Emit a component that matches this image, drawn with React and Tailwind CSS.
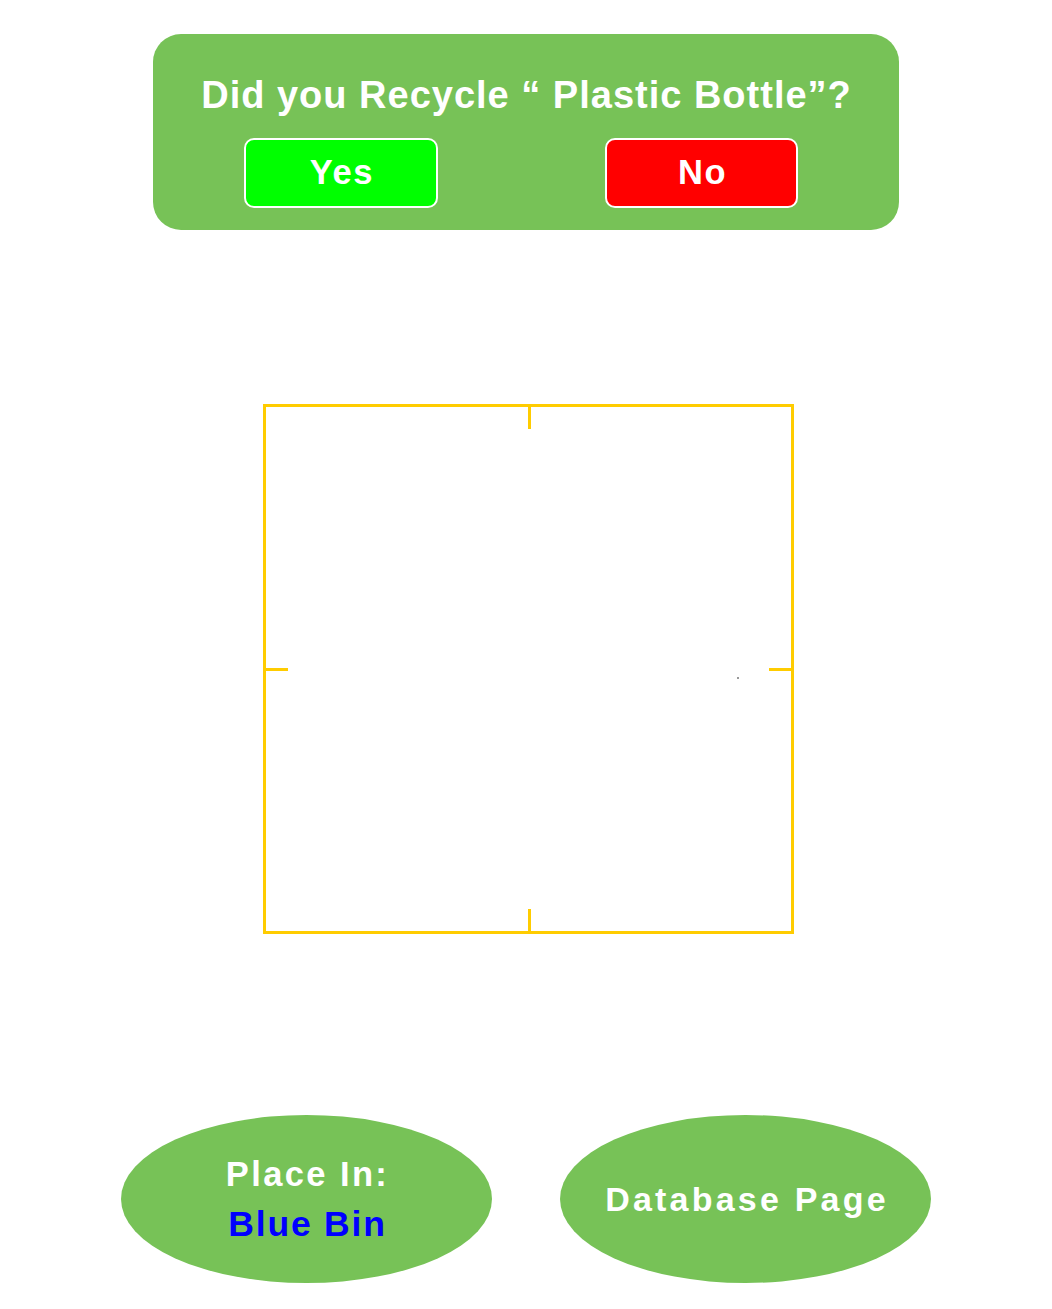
export default function App() {
  return (
    <div className="w-[1052px] h-[1309px] bg-white relative" style={{ fontFamily: '"Liberation Sans", Arial, sans-serif' }}>
      <div className="pt-[34px] pl-[153px]">
        <div className="w-[746px] h-[196px] rounded-[28px] bg-[#77c257] flex flex-col items-center pt-[41px]">
          <div className="text-white font-bold text-[38px] leading-[40px] tracking-[1px] whitespace-nowrap pl-[1px]">Did you Recycle “ Plastic Bottle”?</div>
          <div className="w-full flex justify-between pl-[91px] pr-[101px] mt-[23px]">
            <div className="w-[194px] h-[70px] rounded-[10px] border-2 border-white bg-[#00ff00] flex items-center justify-center text-white font-bold text-[34.5px] tracking-[1.6px] pl-[2px]">Yes</div>
            <div className="w-[193px] h-[70px] rounded-[10px] border-2 border-white bg-[#ff0000] flex items-center justify-center text-white font-bold text-[34.5px] tracking-[1.6px] pl-[2px]">No</div>
          </div>
        </div>
      </div>
      <div className="pl-[263px] mt-[174px]">
        <div className="relative w-[531px] h-[530px] border-[3px] border-[#ffcc00]">
          <div className="absolute left-[262px] top-0 w-[3px] h-[22px] bg-[#ffcc00]" />
          <div className="absolute left-[262px] bottom-0 w-[3px] h-[22px] bg-[#ffcc00]" />
          <div className="absolute top-[261px] left-0 h-[3px] w-[22px] bg-[#ffcc00]" />
          <div className="absolute top-[261px] right-0 h-[3px] w-[22px] bg-[#ffcc00]" />
          <div className="absolute left-[471px] top-[270px] w-[2px] h-[2px] rounded-full bg-[#777777]" />
        </div>
      </div>
      <div className="flex gap-[68px] pl-[121px] mt-[181px]">
        <div className="w-[371px] h-[168px] rounded-[50%] bg-[#77c257] flex flex-col items-center justify-center font-bold leading-[50px]">
          <div className="text-white text-[34.5px] tracking-[2.4px] pl-[2px] whitespace-nowrap">Place In:</div>
          <div className="text-[#0000ff] text-[35.5px] tracking-[1.8px] pl-[2px] whitespace-nowrap">Blue Bin</div>
        </div>
        <div className="w-[371px] h-[168px] rounded-[50%] bg-[#77c257] flex items-center justify-center font-bold text-[34px] tracking-[3.2px] text-white">
          <span className="whitespace-nowrap pl-[3px]">Database Page</span>
        </div>
      </div>
    </div>
  );
}
